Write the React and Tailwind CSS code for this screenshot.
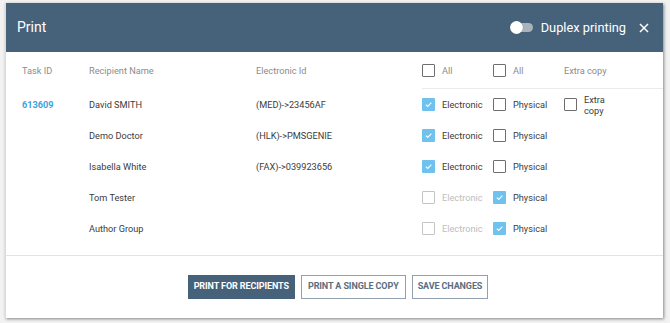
const rows = [
  { task: '613609', name: 'David SMITH', eid: '(MED)->23456AF', el: true, elDis: false, ph: false, extra: true },
  { task: '', name: 'Demo Doctor', eid: '(HLK)->PMSGENIE', el: true, elDis: false, ph: false },
  { task: '', name: 'Isabella White', eid: '(FAX)->039923656', el: true, elDis: false, ph: false },
  { task: '', name: 'Tom Tester', eid: '', el: false, elDis: true, ph: true },
  { task: '', name: 'Author Group', eid: '', el: false, elDis: true, ph: true },
]

function Check({ checked, disabled }) {
  if (checked) {
    return (
      <span className="flex-shrink-0 w-[13px] h-[13px] rounded-[1px] bg-[#6fc1ee] flex items-center justify-center">
        <svg width="9" height="9" viewBox="0 0 10 10" fill="none">
          <path d="M2 5.2 L4.1 7.2 L8.2 2.8" stroke="white" strokeWidth="1.2" />
        </svg>
      </span>
    )
  }
  return (
    <span
      className={`flex-shrink-0 w-[13px] h-[13px] rounded-[1px] border-[1.5px] ${
        disabled ? 'border-[#c4c4c4]' : 'border-[#6e6e6e]'
      }`}
    />
  )
}

function CheckCell({ checked, disabled, label }) {
  return (
    <div className="w-[71px] flex items-center gap-[7px]">
      <Check checked={checked} disabled={disabled} />
      <span className={disabled ? 'text-[#bdbdbd]' : 'text-[#3c3c3c]'}>{label}</span>
    </div>
  )
}

export default function App() {
  return (
    <div className="w-[670px] h-[323px] bg-[#f2f2f2] pt-[3px] pl-[5px] font-['Roboto',sans-serif]">
      <div className="w-[658px] h-[315px] bg-white flex flex-col shadow-[1px_1px_3px_rgba(0,0,0,0.45)] border-l border-[#dcdcdc]">
        {/* Header */}
        <div className="h-[49px] bg-[#46627a] flex items-center pl-[11px] pr-[14px] text-white">
          <span className="text-[14px]">Print</span>
          <div className="ml-auto flex items-center">
            <div className="relative w-[21px] h-[9px] rounded-full bg-[#a9b3bb] mr-[8px]">
              <span className="absolute -left-[2px] -top-[2px] w-[13px] h-[13px] rounded-full bg-white shadow-[0_0_1px_rgba(0,0,0,0.4)]" />
            </div>
            <span className="text-[12.8px]">Duplex printing</span>
            <svg className="ml-[13px]" width="10" height="10" viewBox="0 0 10 10">
              <path d="M1 1 L9 9 M9 1 L1 9" stroke="white" strokeWidth="1.5" />
            </svg>
          </div>
        </div>

        {/* Body */}
        <div className="flex-1 pl-[16px] text-[9.2px]">
          <div className="h-[37px] pt-[1px] flex text-[#8c8c8c]">
            <div className="w-[67px] flex items-center">Task ID</div>
            <div className="w-[167px] flex items-center">Recipient Name</div>
            <div className="w-[166px] flex items-center">Electronic Id</div>
            <div className="flex-1 flex border-b border-[#ebebeb]">
              <div className="w-[71px] flex items-center gap-[7px]">
                <Check />
                <span>All</span>
              </div>
              <div className="w-[71px] flex items-center gap-[7px]">
                <Check />
                <span>All</span>
              </div>
              <div className="flex items-center">Extra copy</div>
            </div>
          </div>

          {rows.map((r, i) => (
            <div key={i} className="h-[31px] flex items-center text-[#3c3c3c]">
              <div className="w-[67px] font-bold text-[#3fa2d9]">{r.task}</div>
              <div className="w-[167px]">{r.name}</div>
              <div className="w-[166px]">{r.eid}</div>
              <CheckCell checked={r.el} disabled={r.elDis} label="Electronic" />
              <CheckCell checked={r.ph} label="Physical" />
              {r.extra && (
                <div className="flex items-center gap-[7px]">
                  <Check />
                  <span className="w-[26px] leading-[11px]">Extra copy</span>
                </div>
              )}
            </div>
          ))}
        </div>

        {/* Footer */}
        <div className="h-[63px] border-t border-[#e3e3e3] flex items-center justify-center gap-[6px] pb-[1px] pl-[7px]">
          <button className="h-[24px] px-[5px] bg-[#46627a] text-white text-[9px] font-bold tracking-[-0.1px] border border-[#46627a]">
            PRINT FOR RECIPIENTS
          </button>
          <button className="h-[24px] px-[6px] bg-white text-[#5a6e80] text-[9px] font-bold tracking-[-0.1px] border border-[#90a0ae]">
            PRINT A SINGLE COPY
          </button>
          <button className="h-[24px] px-[5px] bg-white text-[#5a6e80] text-[9px] font-bold tracking-[-0.1px] border border-[#90a0ae]">
            SAVE CHANGES
          </button>
        </div>
      </div>
    </div>
  )
}
